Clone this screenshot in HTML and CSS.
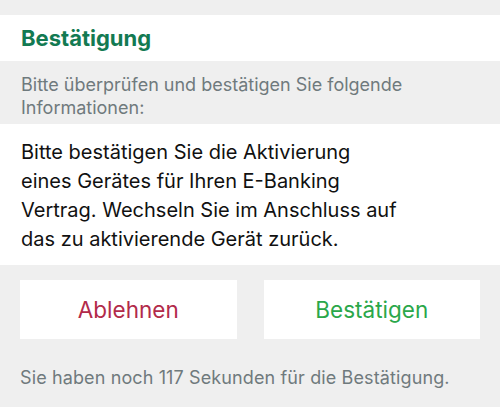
FILE: index.html
```html
<!DOCTYPE html>
<html lang="de">
<head>
<meta charset="utf-8">
<link rel="stylesheet" href="styles.css">
</head>
<body>
<div class="screen">
  <div class="title-bar"><h1 class="title">Bestätigung</h1></div>
  <div class="subtitle">Bitte überprüfen und bestätigen Sie folgende Informationen:</div>
  <div class="content">
    <p class="message">Bitte bestätigen Sie die Aktivierung eines Gerätes für Ihren E-Banking Vertrag. Wechseln Sie im Anschluss auf das zu aktivierende Gerät zurück.</p>
  </div>
  <div class="actions">
    <button class="btn btn-reject">Ablehnen</button>
    <button class="btn btn-confirm">Bestätigen</button>
  </div>
  <div class="footer">Sie haben noch 117 Sekunden für die Bestätigung.</div>
</div>
</body>
</html>
```
FILE: styles.css
```css
html, body {
  margin: 0;
  padding: 0;
  background: #efefef;
}
body {
  font-family: Inter, "Liberation Sans", Arial, sans-serif;
  width: 500px;
  height: 407px;
  overflow: hidden;
}
.screen {
  padding-top: 15px;
}
.title-bar {
  background: #ffffff;
  height: 46px;
  padding: 0 21px;
  display: flex;
  align-items: center;
}
.title {
  margin: 0;
  font-size: 22px;
  font-weight: 700;
  color: #137a52;
}
.subtitle {
  box-sizing: border-box;
  height: 63px;
  padding: 12px 21px 0;
  font-size: 18px;
  line-height: 23px;
  color: #6f7a7d;
}
.content {
  background: #ffffff;
  box-sizing: border-box;
  height: 141px;
  padding: 14px 21px 0;
}
.message {
  margin: 0;
  font-size: 20px;
  line-height: 29px;
  color: #111111;
  width: 380px;
}
.actions {
  display: flex;
  gap: 27px;
  padding: 15px 20px 0;
}
.btn {
  flex: 1;
  height: 59px;
  border: none;
  background: #ffffff;
  font-family: inherit;
  font-size: 22.5px;
  padding: 0;
}
.btn-reject { color: #b22a4a; }
.btn-confirm { color: #2aa74a; }
.footer {
  padding: 28px 20px 0;
  font-size: 18px;
  line-height: 22px;
  letter-spacing: 0.12px;
  color: #6f7a7d;
}
```
